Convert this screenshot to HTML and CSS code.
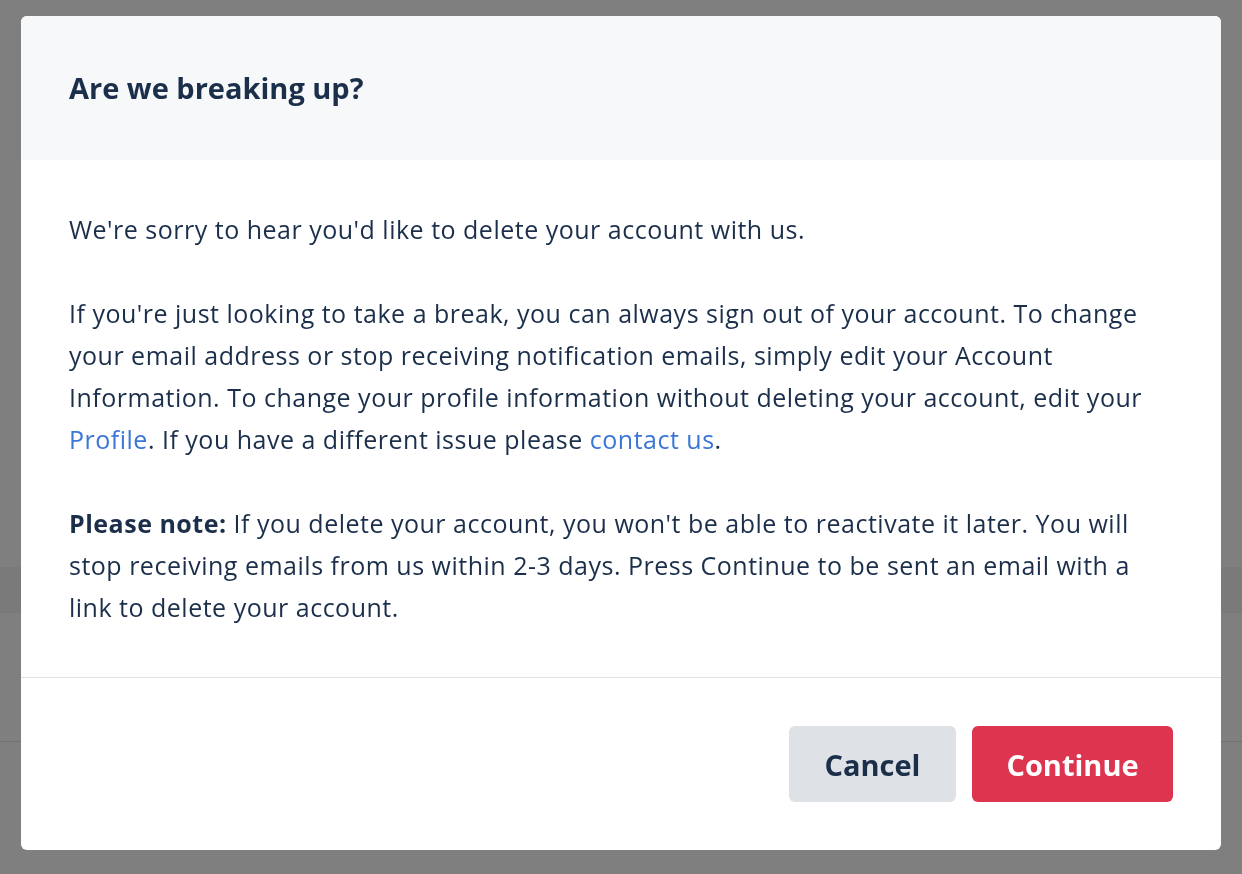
FILE: index.html
```html
<!DOCTYPE html>
<html lang="en">
<head>
  <meta charset="UTF-8">
  <meta name="viewport" content="width=device-width, initial-scale=1.0">
  <title>Delete account</title>
  <link rel="stylesheet" href="styles.css">
</head>
<body>
  <!-- page behind the overlay -->
  <div class="page">
    <div class="page-band"></div>
    <div class="page-row"></div>
  </div>

  <div class="overlay">
    <div class="modal">
      <div class="modal-header">
        <h2>Are we breaking up?</h2>
      </div>
      <div class="modal-body">
        <p>We're sorry to hear you'd like to delete your account with us.</p>
        <p>If you're just looking to take a break, you can always sign out of your account. To change your email address or stop receiving notification emails, simply edit your Account Information. To change your profile information without deleting your account, edit your <a href="#">Profile</a>. If you have a different issue please <a href="#">contact us</a>.</p>
        <p><strong>Please note:</strong> If you delete your account, you won't be able to reactivate it later. You will stop receiving emails from us within 2-3 days. Press Continue to be sent an email with a link to delete your account.</p>
      </div>
      <div class="modal-footer">
        <button class="btn btn-cancel">Cancel</button>
        <button class="btn btn-continue">Continue</button>
      </div>
    </div>
  </div>
</body>
</html>
```

FILE: styles.css
```css
/* General Styling */
body {
  margin: 0;
  font-family: 'Open Sans', 'Liberation Sans', sans-serif;
  color: #1b2f4b;
  background: #fff;
  overflow: hidden;
}

.page {
  box-sizing: border-box;
  height: 874px;
  padding-top: 567px;
}

.page-band {
  height: 46px;
  background: #f4f5f6;
}

.page-row {
  height: 128px;
  border-bottom: 1px solid #e2e3e4;
}

.overlay {
  position: fixed;
  top: 0;
  left: 0;
  right: 0;
  bottom: 0;
  background: rgba(0, 0, 0, 0.5);
  padding: 16px 21px;
}

.modal {
  width: 1200px;
  background: #fff;
  border-radius: 6px;
  overflow: hidden;
}

.modal-header {
  background: #f7f8fa;
  padding: 48px;
}

.modal-header h2 {
  margin: 0;
  font-size: 29px;
  line-height: 48px;
  font-weight: 700;
}

.modal-body {
  padding: 48px 48px 49px;
  border-bottom: 1px solid #dde1e6;
  font-size: 25px;
  letter-spacing: 0.5px;
  line-height: 42px;
}

.modal-body p {
  margin: 0 0 42px;
}

.modal-body p:last-child {
  margin-bottom: 0;
}

.modal-body a {
  color: #3a76d8;
  text-decoration: none;
}

.modal-footer {
  display: flex;
  justify-content: flex-end;
  gap: 16px;
  padding: 48px;
}

.btn {
  height: 76px;
  border: none;
  border-radius: 6px;
  font-family: inherit;
  font-size: 29px;
  font-weight: 700;
  cursor: pointer;
}

.btn-cancel {
  width: 167px;
  background: #dee1e6;
  color: #1b2f4b;
}

.btn-continue {
  width: 201px;
  background: #dd344f;
  color: #fff;
}
```
